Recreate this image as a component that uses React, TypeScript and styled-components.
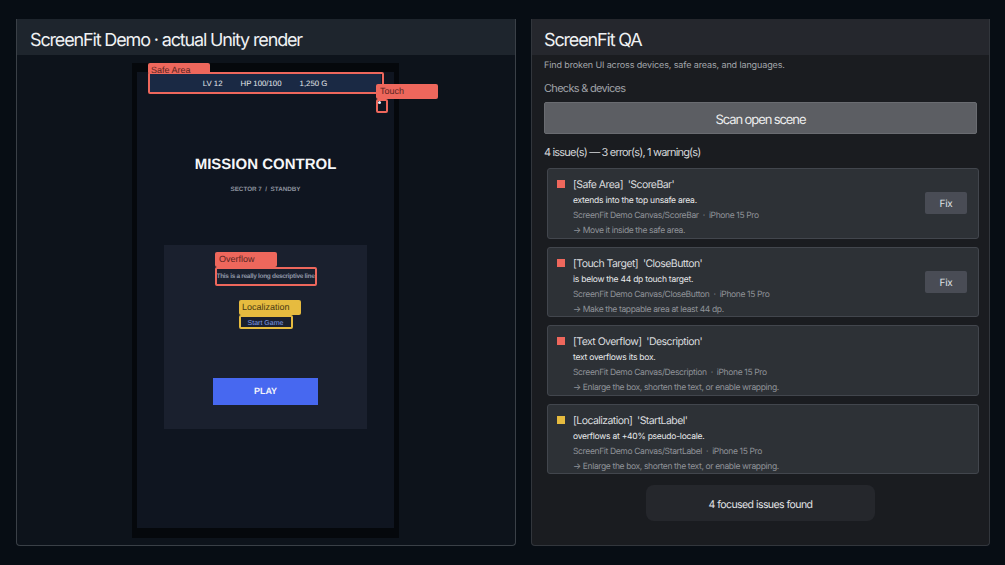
import React, { FC } from 'react';
import styled, { createGlobalStyle } from 'styled-components';

const RED = '#ee675c';
const YELLOW = '#e6bb3f';

const GlobalStyle = createGlobalStyle`
  html, body {
    background: #070d14;
    color: #e8eaed;
    font-family: Inter, "Noto Sans", sans-serif;
    height: 565px;
    margin: 0;
    overflow: hidden;
    text-rendering: geometricPrecision;
  }
`;

const Page = styled.div`
  box-sizing: border-box;
  display: grid;
  gap: 15px;
  grid-template-columns: 500px 459px;
  height: 565px;
  padding: 19px 15px 19px 16px;
`;
const Panel = styled.section<{ $tone: 'demo' | 'qa' }>`
  background: ${(p) => (p.$tone === 'demo' ? '#0d131b' : '#1a1c20')};
  border: 1px solid ${(p) => (p.$tone === 'demo' ? '#3a4047' : '#32363c')};
  border-radius: 0 0 4px 4px;
  border-top: 0;
  box-sizing: border-box;
  display: flex;
  flex-direction: column;
  height: 527px;
  overflow: hidden;
`;
const PanelHeader = styled.h2<{ $tone: 'demo' | 'qa' }>`
  background: ${(p) => (p.$tone === 'demo' ? '#1e252d' : '#25272d')};
  color: #f0f2f4;
  flex: none;
  font-size: 18px;
  font-weight: 400;
  height: 36px;
  letter-spacing: -1.15px;
  line-height: 43px;
  margin: 0 -1px;
  padding-left: ${(p) => (p.$tone === 'demo' ? '14px' : '13px')};
`;

const Stage = styled.div`
  display: flex;
  flex: 1;
  justify-content: center;
  padding-top: 8px;
`;
const Phone = styled.div`
  background: #05080c;
  box-sizing: border-box;
  height: 475px;
  margin-left: -1px;
  padding: 9px 5px 10px;
  position: relative;
  width: 267px;
`;
const Screen = styled.div`
  align-items: center;
  background: #0f1520;
  color: #fff;
  display: flex;
  flex-direction: column;
  font-family: "Liberation Sans", Arial, sans-serif;
  height: 456px;
  position: relative;
`;
const ScoreBar = styled.div`
  align-items: center;
  background: #1a2944;
  box-sizing: border-box;
  color: #e3e6ea;
  display: flex;
  flex: none;
  font-size: 7.8px;
  gap: 18px;
  height: 18px;
  justify-content: center;
  margin: 2px 0 1px -1px;
  width: 232px;
`;
const MissionTitle = styled.div`
  color: #f5f6f7;
  font-size: 15px;
  font-weight: 700;
  line-height: 18px;
  margin-top: 63px;
`;
const Sector = styled.div`
  color: #8c929e;
  font-size: 6.3px;
  font-weight: 700;
  line-height: 8px;
  margin-top: 12px;
`;
const GameCard = styled.div`
  align-items: center;
  background: #1a202e;
  box-sizing: border-box;
  display: flex;
  flex-direction: column;
  height: 184px;
  margin-top: 51px;
  padding-top: 22px;
  width: 203px;
`;
const Description = styled.div`
  color: #8e95a6;
  font-size: 6.5px;
  font-weight: 700;
  letter-spacing: -0.3px;
  line-height: 19px;
  white-space: nowrap;
`;
const StartLabel = styled.div`
  color: #7f9be6;
  font-size: 7px;
  line-height: 14px;
  margin-top: 31px;
`;
const PlayButton = styled.div`
  background: #4768f0;
  color: #f2f4fb;
  font-size: 9px;
  font-weight: 700;
  height: 27px;
  line-height: 27px;
  margin-top: 47px;
  text-align: center;
  width: 105px;
`;

const Tag = styled.div<{ $color: string }>`
  background: ${(p) => p.$color};
  border-radius: 2px;
  box-sizing: border-box;
  color: #5a2522;
  font-family: "Liberation Sans", Arial, sans-serif;
  font-size: 9px;
  padding-left: 4px;
  position: absolute;
  width: 62px;
`;
const Outline = styled.div<{ $color: string }>`
  border: 2px solid ${(p) => p.$color};
  border-radius: 2px;
  box-sizing: border-box;
  position: absolute;
`;
const SafeOutline = styled(Outline)`
  height: 22px;
  left: 16px;
  top: 9px;
  width: 236px;
`;
const SafeTag = styled(Tag)`
  height: 11px;
  left: 16px;
  line-height: 14px;
  padding-left: 3px;
  top: 0;
`;
const TouchOutline = styled(Outline)`
  height: 14px;
  left: 244px;
  top: 36px;
  width: 12px;
`;
const TouchDot = styled.i`
  background: #e8eef8;
  border-radius: 50%;
  height: 3px;
  left: 0;
  position: absolute;
  top: 0;
  width: 3px;
`;
const TouchTag = styled(Tag)`
  height: 15px;
  left: 244px;
  line-height: 15px;
  top: 21px;
`;
const OverflowOutline = styled(Outline)`
  height: 19px;
  left: 83px;
  top: 204px;
  width: 102px;
`;
const OverflowTag = styled(Tag)`
  height: 15px;
  left: 83px;
  line-height: 15px;
  top: 189px;
`;
const LocaleOutline = styled(Outline)`
  height: 14px;
  left: 107px;
  top: 252px;
  width: 54px;
`;
const LocaleTag = styled(Tag)`
  color: #4a3a14;
  height: 15px;
  left: 107px;
  line-height: 15px;
  padding-left: 3px;
  top: 237px;
`;

const QaBody = styled.div`
  display: flex;
  flex: 1;
  flex-direction: column;
  padding: 0 12px;
`;
const Subtitle = styled.p`
  color: #a4a7ac;
  font-size: 9px;
  letter-spacing: -0.12px;
  line-height: 12px;
  margin: 5px 0 0;
`;
const SectionLabel = styled.div`
  color: #a0a3a8;
  font-size: 11px;
  letter-spacing: -0.7px;
  line-height: 14px;
  margin-top: 9px;
`;
const ScanButton = styled.button`
  background: #5c5e63;
  border: 1px solid #6a6c71;
  border-radius: 2px;
  box-sizing: border-box;
  color: #eceded;
  flex: none;
  font-family: inherit;
  font-size: 13px;
  height: 32px;
  letter-spacing: -1.1px;
  margin-top: 7px;
  padding: 3px 0 0;
  text-rendering: geometricPrecision;
  width: 433px;
`;
const Summary = styled.div`
  color: #d4d6d9;
  font-size: 11px;
  letter-spacing: -0.83px;
  line-height: 14px;
  margin-top: 11px;
`;
const IssueList = styled.div`
  display: flex;
  flex-direction: column;
  gap: 8px;
  margin: 9px -2px 0 3px;
`;
const IssueCard = styled.article`
  background: #2d3136;
  border: 1px solid #42464d;
  border-radius: 3px;
  box-sizing: border-box;
  display: flex;
  height: 70.5px;
  overflow: hidden;
  padding: 9px 11px 0 9px;
`;
const Severity = styled.span<{ $color: string }>`
  background: ${(p) => p.$color};
  flex: none;
  height: 8px;
  margin: 2px 8px 0 0;
  width: 8px;
`;
const IssueText = styled.div`
  flex: 1;
  min-width: 0;
`;
const IssueTitle = styled.div`
  color: #d9dbde;
  font-size: 10.5px;
  letter-spacing: -0.56px;
  line-height: 13px;
  white-space: pre;
`;
const IssueMessage = styled.div`
  color: #e8e9eb;
  font-size: 8.5px;
  letter-spacing: -0.24px;
  line-height: 11px;
  margin-top: 5px;
`;
const IssuePath = styled.div`
  color: #8f9298;
  font-size: 8.5px;
  letter-spacing: -0.36px;
  line-height: 11px;
  margin-top: 4px;
  white-space: pre;
`;
const IssueHint = styled.div`
  color: #909399;
  font-size: 8.5px;
  letter-spacing: -0.36px;
  line-height: 11px;
  margin-top: 4px;
`;
const FixButton = styled.button`
  align-self: flex-start;
  background: #494c55;
  border: 0;
  border-radius: 2px;
  color: #dfe0e3;
  flex: none;
  font-family: inherit;
  font-size: 10px;
  font-weight: 400;
  height: 22px;
  letter-spacing: -0.3px;
  margin-top: 14px;
  padding: 2px 0 0;
  text-rendering: geometricPrecision;
  width: 42px;
`;
const FoundPill = styled.div`
  align-self: center;
  background: #25272c;
  border-radius: 8px;
  color: #e2e3e6;
  font-size: 10.5px;
  height: 36px;
  letter-spacing: -0.55px;
  line-height: 40px;
  margin-top: 11px;
  text-align: center;
  width: 229px;
`;

type Issue = {
  title: string;
  message: string;
  path: string;
  hint: string;
  color: string;
  fixable?: boolean;
};

const issues: Issue[] = [
  {
    title: "[Safe Area]  'ScoreBar'",
    message: 'extends into the top unsafe area.',
    path: 'ScreenFit Demo Canvas/ScoreBar  ·  iPhone 15 Pro',
    hint: '→ Move it inside the safe area.',
    color: RED,
    fixable: true,
  },
  {
    title: "[Touch Target]  'CloseButton'",
    message: 'is below the 44 dp touch target.',
    path: 'ScreenFit Demo Canvas/CloseButton  ·  iPhone 15 Pro',
    hint: '→ Make the tappable area at least 44 dp.',
    color: RED,
    fixable: true,
  },
  {
    title: "[Text Overflow]  'Description'",
    message: 'text overflows its box.',
    path: 'ScreenFit Demo Canvas/Description  ·  iPhone 15 Pro',
    hint: '→ Enlarge the box, shorten the text, or enable wrapping.',
    color: RED,
  },
  {
    title: "[Localization]  'StartLabel'",
    message: 'overflows at +40% pseudo-locale.',
    path: 'ScreenFit Demo Canvas/StartLabel  ·  iPhone 15 Pro',
    hint: '→ Enlarge the box, shorten the text, or enable wrapping.',
    color: YELLOW,
  },
];

const App: FC = () => (
  <>
    <GlobalStyle />
    <Page>
      <Panel $tone="demo">
        <PanelHeader $tone="demo">ScreenFit Demo · actual Unity render</PanelHeader>
        <Stage>
          <Phone>
            <Screen>
              <ScoreBar>
                <span>LV 12</span>
                <span>HP 100/100</span>
                <span>1,250 G</span>
              </ScoreBar>
              <MissionTitle>MISSION CONTROL</MissionTitle>
              <Sector>SECTOR 7&nbsp; /&nbsp; STANDBY</Sector>
              <GameCard>
                <Description>This is a really long descriptive line</Description>
                <StartLabel>Start Game</StartLabel>
                <PlayButton>PLAY</PlayButton>
              </GameCard>
            </Screen>
            <SafeOutline $color={RED} />
            <SafeTag $color={RED}>Safe Area</SafeTag>
            <TouchOutline $color={RED}>
              <TouchDot />
            </TouchOutline>
            <TouchTag $color={RED}>Touch</TouchTag>
            <OverflowOutline $color={RED} />
            <OverflowTag $color={RED}>Overflow</OverflowTag>
            <LocaleOutline $color={YELLOW} />
            <LocaleTag $color={YELLOW}>Localization</LocaleTag>
          </Phone>
        </Stage>
      </Panel>
      <Panel $tone="qa">
        <PanelHeader $tone="qa">ScreenFit QA</PanelHeader>
        <QaBody>
          <Subtitle>Find broken UI across devices, safe areas, and languages.</Subtitle>
          <SectionLabel>Checks &amp; devices</SectionLabel>
          <ScanButton>Scan open scene</ScanButton>
          <Summary>4 issue(s) — 3 error(s), 1 warning(s)</Summary>
          <IssueList>
            {issues.map((issue) => (
              <IssueCard key={issue.title}>
                <Severity $color={issue.color} />
                <IssueText>
                  <IssueTitle>{issue.title}</IssueTitle>
                  <IssueMessage>{issue.message}</IssueMessage>
                  <IssuePath>{issue.path}</IssuePath>
                  <IssueHint>{issue.hint}</IssueHint>
                </IssueText>
                {issue.fixable && <FixButton>Fix</FixButton>}
              </IssueCard>
            ))}
          </IssueList>
          <FoundPill>4 focused issues found</FoundPill>
        </QaBody>
      </Panel>
    </Page>
  </>
);

export default App;
